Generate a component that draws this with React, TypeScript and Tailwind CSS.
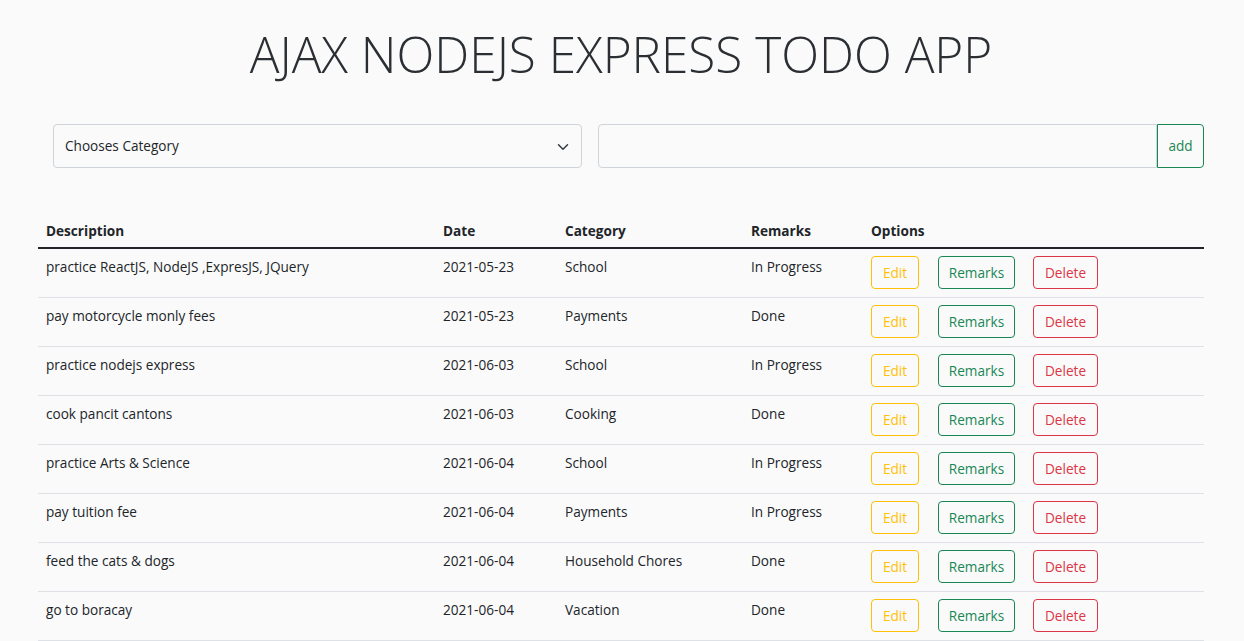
import React from 'react';

const todos = [
  { description: 'practice ReactJS, NodeJS ,ExpresJS, JQuery', date: '2021-05-23', category: 'School', remarks: 'In Progress' },
  { description: 'pay motorcycle monly fees', date: '2021-05-23', category: 'Payments', remarks: 'Done' },
  { description: 'practice nodejs express', date: '2021-06-03', category: 'School', remarks: 'In Progress' },
  { description: 'cook pancit cantons', date: '2021-06-03', category: 'Cooking', remarks: 'Done' },
  { description: 'practice Arts & Science', date: '2021-06-04', category: 'School', remarks: 'In Progress' },
  { description: 'pay tuition fee', date: '2021-06-04', category: 'Payments', remarks: 'In Progress' },
  { description: 'feed the cats & dogs', date: '2021-06-04', category: 'Household Chores', remarks: 'Done' },
  { description: 'go to boracay', date: '2021-06-04', category: 'Vacation', remarks: 'Done' },
];

const cols = 'grid grid-cols-[397px_122px_186px_120px_341px]';

export default function App() {
  return (
    <div className="min-h-[641px] bg-[#fafafa] text-[#212529] font-['Open_Sans',sans-serif] text-[13.6px]">
      <div className="w-[1166px] ml-[38px]">
        <h1 className="pt-[22px] h-[124px] text-center text-[49.5px] font-light leading-[64px] text-[#2b2f33]">
          AJAX NODEJS EXPRESS TODO APP
        </h1>

        {/* Form */}
        <div className="flex ml-[15px] h-[44px]">
          <div className="relative w-[529px] h-[44px] border border-[#ced4da] rounded-[4px] bg-[#fafafa] flex items-center pl-[11px] pt-[1px]">
            <span>Chooses Category</span>
            <svg className="absolute right-[12px] top-[16px]" width="12" height="12" viewBox="0 0 16 16" fill="none">
              <path d="M2 5l6 6 6-6" stroke="#343a40" strokeWidth="2" strokeLinecap="round" strokeLinejoin="round" />
            </svg>
          </div>
          <div className="ml-[16px] flex">
            <div className="w-[559px] h-[44px] border border-[#ced4da] rounded-l-[4px] bg-[#fafafa]" />
            <button className="w-[47px] h-[44px] border border-[#198754] rounded-r-[4px] text-[#198754] flex items-center justify-center pt-[1px]">
              add
            </button>
          </div>
        </div>

        {/* Table */}
        <div className="mt-[45px]">
          <div className={`${cols} h-[36px] items-end border-b-2 border-[#212529] font-bold`}>
            {['Description', 'Date', 'Category', 'Remarks', 'Options'].map((h) => (
              <div key={h} className="px-[8px] pb-[6px] leading-[21px]">{h}</div>
            ))}
          </div>
          {todos.map((t, i) => (
            <div key={i} className={`${cols} h-[49px] border-b border-[#dee2e6]`}>
              <div className="px-[8px] pt-[7px] leading-[21px]">{t.description}</div>
              <div className="px-[8px] pt-[7px] leading-[21px]">{t.date}</div>
              <div className="px-[8px] pt-[7px] leading-[21px]">{t.category}</div>
              <div className="px-[8px] pt-[7px] leading-[21px]">{t.remarks}</div>
              <div className="px-[8px] pt-[7px] flex">
                <button className="w-[48px] h-[33px] border border-[#ffc107] text-[#ffc107] rounded-[4px] pt-[1px]">Edit</button>
                <button className="ml-[19px] w-[77px] h-[33px] border border-[#198754] text-[#198754] rounded-[4px] pt-[1px]">Remarks</button>
                <button className="ml-[18px] w-[65px] h-[33px] border border-[#dc3545] text-[#dc3545] rounded-[4px] pt-[1px]">Delete</button>
              </div>
            </div>
          ))}
        </div>
      </div>
    </div>
  );
}
